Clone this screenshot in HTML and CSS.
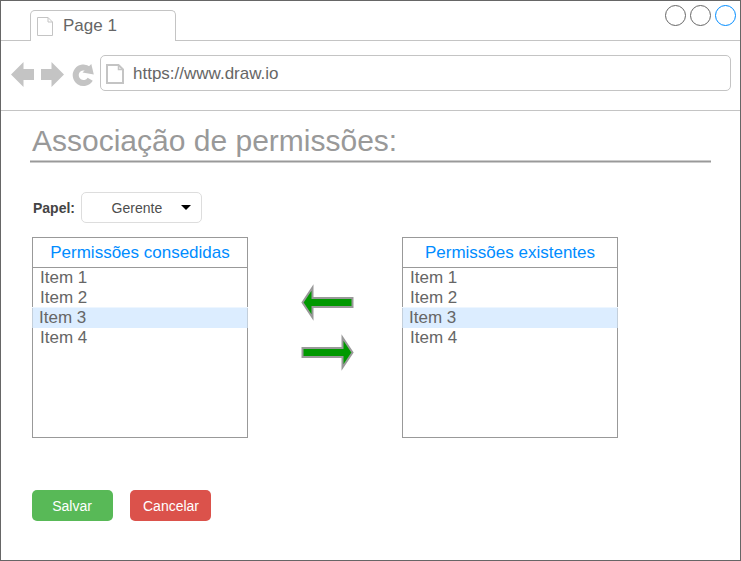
FILE: index.html
```html
<!DOCTYPE html>
<html lang="pt">
<head>
<meta charset="utf-8">
<title>Associação de permissões</title>
<link rel="stylesheet" href="styles.css">
</head>
<body>
<div class="window">
  <header class="tabs">
    <div class="tabs-lead"></div>
    <div class="tab">
      <svg class="tab-icon" width="16" height="19" viewBox="0 0 16 19"><path d="M.5.5H11L15.500 5V18.500H.5ZM11 .5V5H15.500"/></svg>
      <span>Page 1</span>
    </div>
    <div class="tabs-rest">
      <i class="dot"></i><i class="dot"></i><i class="dot dot-active"></i>
    </div>
  </header>
  <nav class="toolbar">
    <svg class="nav-icons" width="89" height="30" viewBox="10 60 89 30">
      <path class="solid" d="M11 74.500L23.500 62V69H34V80H23.500V87Z"/>
      <path class="solid" d="M64 74.500L51.500 62V69H41V80H51.500V87Z"/>
      <path class="reload" d="M90.200 79.200A7.800 7.800 0 1 1 88.500 69.200"/>
      <path class="solid" d="M91.300 64L93.800 74.500L82.500 72.500Z"/>
    </svg>
    <div class="address">
      <svg class="page-icon" width="18" height="20" viewBox="0 0 18 20"><path d="M1 1H12.500L17 5.500V19H1Z"/><path class="fold" d="M12.500 1V5.500H17"/></svg>
      <span>https://www.draw.io</span>
    </div>
  </nav>
  <main class="content">
    <h1>Associação de permissões:</h1>
    <svg class="rule" width="681" height="3"><path d="M0 1.500H681"/></svg>
    <div class="role">
      <label>Papel:</label>
      <div class="select"><span>Gerente</span><svg width="10" height="5" viewBox="0 0 10 5"><path d="M0 0H10L5 5Z"/></svg></div>
    </div>
    <div class="lists">
      <section class="list">
        <h2>Permissões consedidas</h2>
        <ul><li>Item 1</li><li>Item 2</li><li class="selected">Item 3</li><li>Item 4</li></ul>
      </section>
      <svg class="arrows" width="54" height="90" viewBox="300 283 54 90">
        <path d="M302.500 302.500L312.500 287.500V298H352.500V307H312.500V317.500Z"/>
        <path d="M352.500 352.500L342.500 337.500V348H302.500V357H342.500V367.500Z"/>
      </svg>
      <section class="list">
        <h2>Permissões existentes</h2>
        <ul><li>Item 1</li><li>Item 2</li><li class="selected">Item 3</li><li>Item 4</li></ul>
      </section>
    </div>
    <div class="actions">
      <button class="save">Salvar</button>
      <button class="cancel">Cancelar</button>
    </div>
  </main>
</div>
</body>
</html>
```
FILE: styles.css
```css
* { box-sizing: border-box; }
body {
  margin: 0;
  background: #fff;
  font: 17px/20px "Liberation Sans", Arial, sans-serif;
  color: #666;
}
svg { display: block; flex: none; fill: none; }
.window { width: 741px; height: 561px; border: 1px solid #666; }

.tabs { display: flex; height: 40px; }
.tabs-lead { width: 29px; border-bottom: 1px solid #c4c4c4; }
.tab {
  display: flex;
  width: 146px;
  margin-top: 9px;
  padding: 5px 0 0 6px;
  border: 1px solid #c4c4c4;
  border-bottom: 0;
  border-radius: 5px 5px 0 0;
}
.tab-icon { margin-top: 1px; stroke: #c4c4c4; }
.tab span { margin-left: 10px; }
.tabs-rest {
  flex: 1;
  display: flex;
  justify-content: flex-end;
  gap: 4px;
  padding: 4px 4px 0 0;
  border-bottom: 1px solid #c4c4c4;
}
.dot { width: 21px; height: 21px; border: 1px solid #666; border-radius: 50%; }
.dot-active { border-color: #008cff; }

.toolbar {
  display: flex;
  height: 70px;
  padding: 14px 9px 0;
  border-bottom: 1px solid #c4c4c4;
}
.nav-icons { margin-top: 5px; margin-right: 1px; }
.solid { fill: #c4c4c4; }
.reload { stroke: #c4c4c4; stroke-width: 6; }
.address {
  display: flex;
  align-items: center;
  width: 631px;
  height: 36px;
  padding-left: 5px;
  border: 1px solid #c4c4c4;
  border-radius: 5px;
}
.page-icon { margin-top: 1px; stroke: #c4c4c4; stroke-width: 2; }
.page-icon .fold { stroke-width: 1.500; }
.address span { margin-left: 9px; padding-top: 2px; }

.content { padding: 12px 0 0 29px; }
h1 { margin: 0 0 0 2px; font-size: 30px; font-weight: 400; line-height: 36px; color: #999; }
.rule { margin-top: 1px; stroke: #999; stroke-width: 2; }
.role { display: flex; margin: 29px 0 0 3px; font-size: 14px; line-height: 33px; color: #4d4d4d; }
.role label { width: 48px; height: 31px; font-weight: 700; color: #444; }
.select {
  display: flex;
  align-items: center;
  width: 121px;
  height: 31px;
  padding-left: 29.600px;
  border: 1px solid #ddd;
  border-radius: 5px;
}
.select span { padding-top: 1px; }
.select svg { margin-left: 19px; fill: #000; }
.lists { display: flex; margin: 14px 0 0 2px; }
.list { width: 216px; height: 201px; border: 1px solid #999; }
.list h2 {
  height: 30px;
  margin: 0;
  border-bottom: 1px solid #999;
  font-size: 17px;
  font-weight: 400;
  line-height: 29px;
  text-align: center;
  color: #008cff;
}
.list ul { margin: 0; padding: 0; list-style: none; }
.list li { height: 20px; padding-left: 7px; line-height: 20px; }
.list .selected {
  margin: 0 -1px;
  padding-left: 6px;
  border: solid #c3cfdb;
  border-width: 0 1px;
  background: #dcedff;
  box-shadow: 0 -1px #edf6ff;
}
.arrows { margin: 46px 48px 0 52px; fill: #009900; stroke: #999; stroke-width: 2; }
.actions { display: flex; gap: 17px; margin: 52px 0 0 2px; }
button {
  width: 81px;
  height: 31px;
  padding: 2px 0 0;
  border: 0;
  border-radius: 5px;
  font: 14px/29px "Liberation Sans", Arial, sans-serif;
  color: #fff;
}
.save { padding-right: 1px; background: #58b957; }
.cancel { padding-left: 1px; background: #db524b; }
```
